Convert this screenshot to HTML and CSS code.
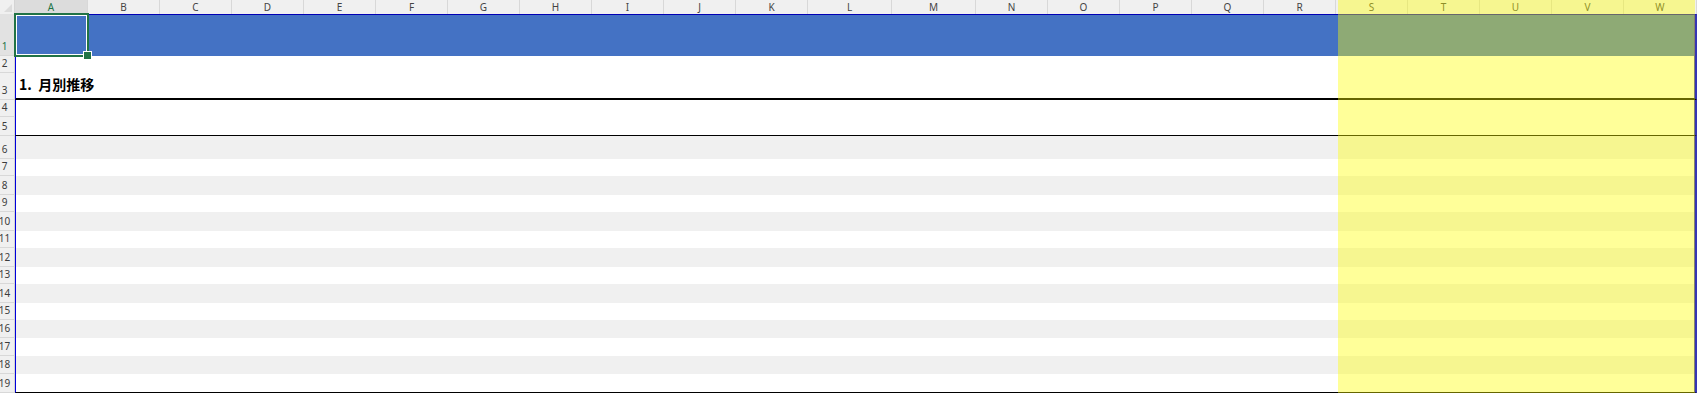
FILE: index.html
```html
<!DOCTYPE html>
<html lang="ja">
<head>
<meta charset="utf-8">
<title>Sheet</title>
<link rel="stylesheet" href="styles.css">
</head>
<body>
<div class="sheet">
  <div class="corner"><span class="tri"></span></div>
  <div class="colheads">
    <div class="ch sel">A</div><div class="ch">B</div><div class="ch">C</div><div class="ch">D</div>
    <div class="ch">E</div><div class="ch">F</div><div class="ch">G</div><div class="ch">H</div>
    <div class="ch">I</div><div class="ch">J</div><div class="ch">K</div><div class="ch">L</div>
    <div class="ch">M</div><div class="ch">N</div><div class="ch">O</div><div class="ch">P</div>
    <div class="ch">Q</div><div class="ch">R</div><div class="ch">S</div><div class="ch">T</div>
    <div class="ch">U</div><div class="ch">V</div><div class="ch">W</div>
  </div>

  <div class="rh rhsel"><span>1</span></div>
  <div class="row r-blue"><div class="selection"><span class="handle"></span></div></div>
  <div class="rh"><span>2</span></div>
  <div class="row"></div>
  <div class="rh"><span>3</span></div>
  <div class="row r-title"><span class="title">1.  月別推移</span></div>
  <div class="rh"><span>4</span></div>
  <div class="row"></div>
  <div class="rh"><span>5</span></div>
  <div class="row r-line"></div>
  <div class="rh"><span>6</span></div>
  <div class="row r-gray"></div>
  <div class="rh"><span>7</span></div>
  <div class="row"></div>
  <div class="rh"><span>8</span></div>
  <div class="row r-gray"></div>
  <div class="rh"><span>9</span></div>
  <div class="row"></div>
  <div class="rh"><span>10</span></div>
  <div class="row r-gray"></div>
  <div class="rh"><span>11</span></div>
  <div class="row"></div>
  <div class="rh"><span>12</span></div>
  <div class="row r-gray"></div>
  <div class="rh"><span>13</span></div>
  <div class="row"></div>
  <div class="rh"><span>14</span></div>
  <div class="row r-gray"></div>
  <div class="rh"><span>15</span></div>
  <div class="row"></div>
  <div class="rh"><span>16</span></div>
  <div class="row r-gray"></div>
  <div class="rh"><span>17</span></div>
  <div class="row"></div>
  <div class="rh"><span>18</span></div>
  <div class="row r-gray"></div>
  <div class="rh"><span>19</span></div>
  <div class="row r-last"></div>

  <div class="highlight"></div>
</div>
</body>
</html>
```

FILE: styles.css
```css
* { box-sizing: border-box; }
html, body { margin: 0; padding: 0; background: #ffffff; }
body { font-family: "Noto Sans", "Liberation Sans", sans-serif; }

.sheet {
  position: relative;
  width: 1697px;
  height: 393px;
  overflow: hidden;
  display: grid;
  grid-template-columns: 15px 1fr;
  grid-template-rows: 14px 42px 17px 27px 17px 19px 23px 17px 19px 17px 19px 17px 19px 17px 19px 17px 18px 18px 18px 19px;
}

.corner {
  background: #f0f0f0;
  border-right: 1px solid #d4d4d4;
  position: relative;
}
.tri {
  position: absolute;
  right: 2px;
  bottom: 2px;
  width: 0;
  height: 0;
  border-left: 8px solid transparent;
  border-bottom: 8px solid #dcdcdc;
}

.colheads {
  display: grid;
  grid-template-columns: 73px repeat(10, 72px) 84px 84px repeat(9, 72px) 1fr;
  background: #f0f0f0;
}
.ch {
  border-right: 1px solid #d8d8d8;
  font-size: 10px;
  line-height: 12px;
  color: #444444;
  text-align: center;
  padding-top: 1px;
}
.ch.sel {
  background: #dcdcdc;
  color: #217346;
  border-bottom: 2px solid #217346;
}

.rh {
  background: #f0f0f0;
  border-right: 1px solid #d4d4d4;
  border-bottom: 1px solid #d8d8d8;
  display: flex;
  align-items: flex-end;
  justify-content: center;
  padding-right: 5px;
  padding-bottom: 3px;
  overflow: hidden;
  font-size: 10px;
  line-height: 11px;
  color: #3c3c3c;
}
.rh span { white-space: nowrap; }
.rhsel { background: #e2e2e2; color: #217346; }

.row {
  background: #ffffff;
  border-left: 1px solid #0000dc;
  border-right: 3px solid #3535b5;
}
.r-gray { background: #f0f0f0; }
.r-blue {
  background: #4472c4;
  border-top: 1px solid #0000b4;
  position: relative;
}
.r-title {
  border-bottom: 2px solid #000000;
  display: flex;
  align-items: flex-end;
  padding: 0 0 6px 3px;
}
.title {
  font-family: "Noto Sans CJK JP", "Noto Sans", sans-serif;
  font-weight: 700;
  font-size: 14px;
  line-height: 16px;
  color: #000000;
  white-space: pre;
}
.r-line { border-bottom: 1px solid #000000; }
.r-last { border-bottom: 1px solid #000000; }

.selection {
  position: absolute;
  left: -2px;
  top: -2px;
  width: 75px;
  height: 44px;
  border: 2px solid #217346;
  box-shadow: inset 0 0 0 1px #ffffff;
  z-index: 1;
}
.handle {
  position: absolute;
  right: -4px;
  bottom: -4px;
  width: 7px;
  height: 7px;
  background: #217346;
  outline: 1px solid #ffffff;
}

.highlight {
  position: absolute;
  left: 1338px;
  top: 0;
  width: 357px;
  height: 393px;
  background: rgba(255, 255, 0, 0.4);
  pointer-events: none;
  z-index: 2;
}
```
